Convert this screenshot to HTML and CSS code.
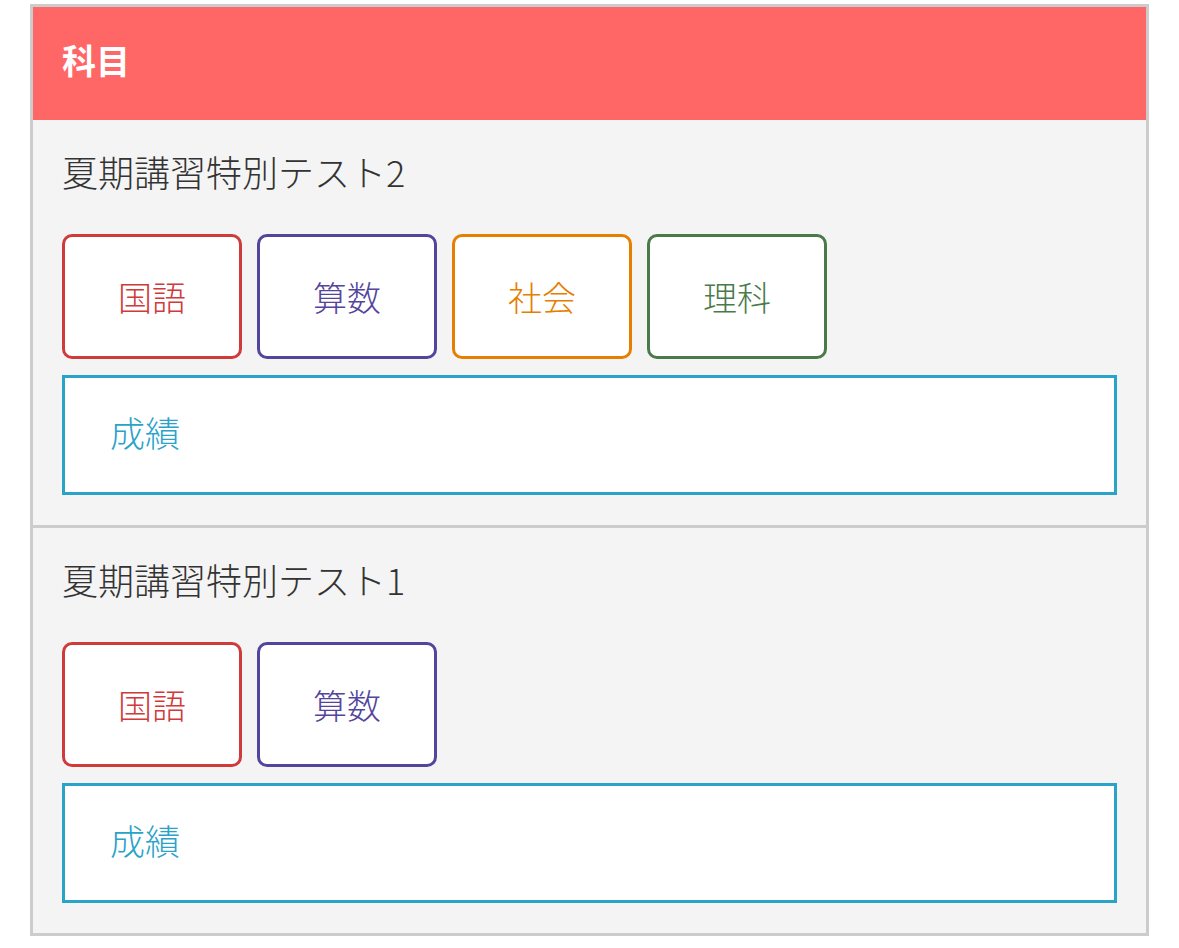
FILE: index.html
```html
<!DOCTYPE html>
<html lang="ja">
<head>
    <meta charset="UTF-8">
    <meta name="viewport" content="width=device-width, initial-scale=1.0">
    <title>科目</title>
    <link rel="stylesheet" href="styles.css">
</head>
<body>
    <div class="subject-panel">
        <div class="panel-header">科目</div>

        <div class="test-section">
            <div class="test-title">夏期講習特別テスト2</div>
            <div class="subject-list">
                <a class="subject-btn kokugo" href="#">国語</a>
                <a class="subject-btn sansu" href="#">算数</a>
                <a class="subject-btn shakai" href="#">社会</a>
                <a class="subject-btn rika" href="#">理科</a>
            </div>
            <a class="score-btn" href="#">成績</a>
        </div>

        <div class="test-section">
            <div class="test-title">夏期講習特別テスト1</div>
            <div class="subject-list">
                <a class="subject-btn kokugo" href="#">国語</a>
                <a class="subject-btn sansu" href="#">算数</a>
            </div>
            <a class="score-btn" href="#">成績</a>
        </div>
    </div>
</body>
</html>
```

FILE: styles.css
```css
body {
    margin: 0;
    font-family: "Noto Sans CJK JP", "Noto Sans", sans-serif;
    font-weight: 300;
    color: #333;
    background: #fff;
}
.subject-panel {
    margin: 4px 30px;
    border: 3px solid #ccc;
    background: #f4f4f4;
}
.panel-header {
    height: 113px;
    box-sizing: border-box;
    padding: 0 29px 8px;
    display: flex;
    align-items: center;
    background: #ff6666;
    color: #fff;
    font-size: 34px;
    font-weight: bold;
}
.test-section {
    padding: 26px 29px 30px;
}
.test-section + .test-section {
    border-top: 3px solid #ccc;
}
.test-title {
    font-size: 36px;
    line-height: 50px;
    margin-bottom: 38px;
}
.subject-list {
    display: flex;
    gap: 15px;
    margin-bottom: 16px;
}
.subject-btn {
    width: 180px;
    height: 125px;
    box-sizing: border-box;
    display: flex;
    align-items: center;
    justify-content: center;
    background: #fff;
    border: 3px solid;
    border-radius: 10px;
    font-size: 34px;
    text-decoration: none;
}
.kokugo { color: #cf3a3a; border-color: #cf3a3a; }
.sansu { color: #53459b; border-color: #53459b; }
.shakai { color: #e67e00; border-color: #e67e00; }
.rika { color: #4a7a4a; border-color: #4a7a4a; }
.score-btn {
    height: 120px;
    box-sizing: border-box;
    display: flex;
    align-items: center;
    padding: 0 0 7px 45px;
    background: #fff;
    border: 3px solid #2aa3c9;
    color: #2aa3c9;
    font-size: 35px;
    text-decoration: none;
}
```
